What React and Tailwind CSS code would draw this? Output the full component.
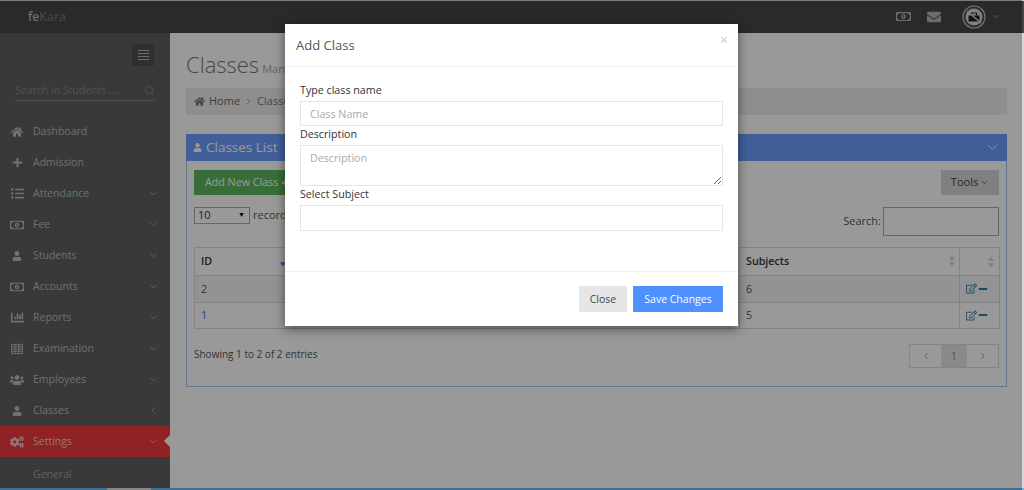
import {
  FaHome, FaPlus, FaListUl, FaRegMoneyBillAlt, FaUser, FaChartBar, FaUsers, FaCogs, FaEnvelope, FaRegEdit, FaMinus,
} from "react-icons/fa";
import { ChevronDown, ChevronLeft, ChevronRight, Search } from "lucide-react";

function GridIcon({ size }) {
  return (
    <svg width={size} height={size} viewBox="0 0 13 13" fill="none" stroke="currentColor" strokeWidth="1">
      <path d="M.5 1.5h12v10H.5zM.5 4h12M.5 6.5h12M.5 9h12M4.5 1.5v10M8.5 1.5v10" />
    </svg>
  );
}

const menu = [
  { label: "Dashboard", icon: FaHome, size: 12 },
  { label: "Admission", icon: FaPlus, size: 11 },
  { label: "Attendance", icon: FaListUl, size: 13, arrow: "down" },
  { label: "Fee", icon: FaRegMoneyBillAlt, size: 14, arrow: "down" },
  { label: "Students", icon: FaUser, size: 10, arrow: "down" },
  { label: "Accounts", icon: FaRegMoneyBillAlt, size: 14, arrow: "down" },
  { label: "Reports", icon: FaChartBar, size: 13, arrow: "down" },
  { label: "Examination", icon: GridIcon, size: 12, arrow: "down" },
  { label: "Employees", icon: FaUsers, size: 14, arrow: "down" },
  { label: "Classes", icon: FaUser, size: 10, arrow: "left" },
  { label: "Settings", icon: FaCogs, size: 14, arrow: "down", active: true },
];

function SortIcon({ active }) {
  return (
    <svg width="6" height="12" viewBox="0 0 7 13" className="shrink-0">
      <path d="M3.5 0 7 5H0z" fill={active ? "transparent" : "#d2d2d2"} />
      <path d="M0 8h7l-3.5 5z" fill={active ? "#6f7fd8" : "#d2d2d2"} />
    </svg>
  );
}

function SideItem({ item }) {
  const Icon = item.icon;
  return (
    <div className={`relative flex items-center h-[31px] ${item.active ? "bg-[#ef3a3f] text-[#f0c8c8]" : ""}`}>
      <span className="w-[33px] flex justify-center pl-[5px] pr-[4px]">
        <Icon size={item.size} />
      </span>
      <span>{item.label}</span>
      {item.arrow === "down" && <ChevronDown size={11} strokeWidth={1.5} className="absolute left-[148px]" />}
      {item.arrow === "left" && <ChevronLeft size={11} strokeWidth={1.5} className="absolute left-[148px]" />}
      {item.active && (
        <span className="absolute right-0 top-[9px] border-y-[6px] border-r-[6px] border-y-transparent border-r-white" />
      )}
    </div>
  );
}

function Sidebar() {
  return (
    <aside className="w-[170px] shrink-0 bg-[#5f5f5f] text-[#bdbdbd] text-[10.5px]">
      <div className="h-[83px] relative">
        <div className="flex justify-end pt-[11px] pr-[16px]">
          <div className="w-[22px] h-[22px] bg-[#505050] flex items-center justify-center text-[#b5b5b5]">
            <svg width="11" height="10" viewBox="0 0 11 10" stroke="currentColor" strokeWidth="1">
              <path d="M0 .5h11M0 3.5h11M0 6.5h11M0 9.5h11" />
            </svg>
          </div>
        </div>
        <div className="mx-[15px] mt-[15px] h-[20px] border-b border-[#8a8a8a] flex items-center justify-between text-[#8a8a8a]">
          <span>Search in Students ....</span>
          <Search size={11} />
        </div>
      </div>
      {menu.map((m) => (
        <SideItem key={m.label} item={m} />
      ))}
      <div className="pl-[33px] pt-[10px] text-[#a0a0a0]">General</div>
    </aside>
  );
}

function Panel() {
  return (
    <section className="mt-[19px] h-[253px] border border-[#a9c3f2] border-t-0">
      <div className="h-[27px] bg-[#6c9fff] flex items-center justify-between pl-[7px] pr-[7px] text-white -mx-px">
        <span className="flex items-center gap-[4px] text-[13.5px] font-medium">
          <FaUser size={9} /> Classes List
        </span>
        <ChevronDown size={15} strokeWidth={1.5} />
      </div>
      <div className="px-[7px] pt-[9px] text-[#555] text-[11px]">
        <div className="flex justify-between">
          <button className="h-[25px] w-[200px] bg-[#5cb85c] text-white text-[10.7px] text-left pl-[11px] flex items-center gap-[3px]">
            Add New Class <FaPlus size={8} />
          </button>
          <button className="h-[25px] w-[58px] bg-[#d6d6d6] text-[#444] flex items-center justify-center gap-[2px]">
            Tools <ChevronDown size={9} />
          </button>
        </div>
        <div className="flex justify-between mt-[12px] h-[29px]">
          <div className="flex items-start gap-[3px]">
            <div className="w-[56px] h-[17px] border border-[#aaa] flex items-center justify-between pl-[3px] pr-[4px] text-[#333]">
              <span>10</span>
              <span className="text-[7px] text-black">▼</span>
            </div>
            <span>records per page</span>
          </div>
          <div className="flex items-center gap-[2px]">
            <span>Search:</span>
            <div className="w-[116px] h-[29px] border border-[#aaa]" />
          </div>
        </div>
        <table className="mt-[11px] w-[805px] table-fixed border-collapse text-[10.7px]">
          <colgroup>
            <col className="w-[92px]" />
            <col className="w-[453px]" />
            <col className="w-[220px]" />
            <col className="w-[40px]" />
          </colgroup>
          <thead>
            <tr className="h-[28px] text-[#333] font-semibold">
              <th className="border border-[#ddd] pl-[6px] text-left font-semibold">
                <div className="flex justify-between items-center"><span>ID</span><SortIcon active /></div>
              </th>
              <th className="border border-[#ddd]" />
              <th className="border border-[#ddd] pl-[6px] pr-[4px] text-left font-semibold">
                <div className="flex justify-between items-center"><span>Subjects</span><SortIcon /></div>
              </th>
              <th className="border border-[#ddd] pr-[5px]">
                <div className="flex justify-end"><SortIcon /></div>
              </th>
            </tr>
          </thead>
          <tbody>
            {[["2", "6", "bg-[#f5f5f5]", "text-[#555]"], ["1", "5", "", "text-[#337ab7]"]].map(([id, subj, bg, idColor]) => (
              <tr key={id} className={`h-[26.5px] ${bg}`}>
                <td className={`border border-[#ddd] px-[6px] ${idColor}`}>{id}</td>
                <td className="border border-[#ddd]" />
                <td className="border border-[#ddd] px-[6px]">{subj}</td>
                <td className="border border-[#ddd] pl-[6px]">
                  <div className="flex items-center gap-[1px] text-[#3f86b0]">
                    <FaRegEdit size={11} />
                    <FaMinus size={10} className="text-[#2a7aa8]" />
                  </div>
                </td>
              </tr>
            ))}
          </tbody>
        </table>
        <div className="flex justify-between items-start mt-[15px]">
          <span className="pt-[3px] text-[10px]">Showing 1 to 2 of 2 entries</span>
          <div className="flex h-[24px] border border-[#ddd] text-[#888] items-stretch">
            <span className="w-[31px] flex items-center justify-center"><ChevronLeft size={10} /></span>
            <span className="w-[26px] flex items-center justify-center bg-[#e6e6e6]">1</span>
            <span className="w-[31px] flex items-center justify-center"><ChevronRight size={10} /></span>
          </div>
        </div>
      </div>
    </section>
  );
}

function Field({ label, placeholder, textarea, height }) {
  return (
    <div>
      <div className="text-[#333] leading-[16px] h-[15px]">{label}</div>
      {textarea ? (
        <textarea
          placeholder={placeholder}
          className={`block w-full ${height} mt-[4px] border border-[#e5e5e5] px-[9px] py-[4px] placeholder:text-[#aaa] outline-none`}
        />
      ) : (
        <input
          placeholder={placeholder}
          className={`block w-full ${height} mt-[4px] border border-[#e5e5e5] px-[9px] placeholder:text-[#aaa] outline-none`}
        />
      )}
    </div>
  );
}

function Modal() {
  return (
    <div className="absolute left-[285px] top-[24px] w-[453px] h-[302px] bg-white shadow-[0_3px_10px_rgba(0,0,0,0.5)] text-[10.7px] text-[#555]">
      <div className="relative h-[43px] border-b border-[#eee] flex items-center pl-[11px] pt-[1px] text-[13px] text-[#555]">
        Add Class
        <span className="absolute right-[10px] top-[5px] text-[14px] text-[#ccc]">×</span>
      </div>
      <div className="h-[204px] px-[15px] pt-[15px]">
        <Field label="Type class name" placeholder="Class Name" height="h-[25px]" />
        <Field label="Description" placeholder="Description" textarea height="h-[41px]" />
        <Field label="Select Subject" height="h-[26px]" />
      </div>
      <div className="border-t border-[#eee] h-[55px] flex justify-end items-start gap-[6px] pt-[14px] pr-[15px] text-[10.5px]">
        <button className="w-[48px] h-[26px] pt-px bg-[#e6e6e6] text-[#444]">Close</button>
        <button className="w-[90px] h-[26px] pt-px bg-[#4d90fe] text-white">Save Changes</button>
      </div>
    </div>
  );
}

export default function App() {
  return (
    <div className="relative w-[1024px] h-[490px] overflow-hidden bg-white font-['Open_Sans',sans-serif] flex flex-col">
      <div className="h-px bg-[#ccc] shrink-0" />
      <header className="h-[32px] shrink-0 bg-[#474747] flex items-center justify-between pl-[28px] pr-[24px] border-b border-[#444]">
        <span className="text-[12px] font-semibold text-[#b4b4b4]">fe<span className="text-[#707070]">Kara</span></span>
        <div className="flex items-center text-[#b5b5b5]">
          <FaRegMoneyBillAlt size={15} />
          <FaEnvelope size={14} className="ml-[16px]" />
          <svg width="24" height="24" viewBox="0 0 24 24" className="ml-[21px]">
            <circle cx="12" cy="12" r="11" fill="#474747" stroke="#c0c0c0" strokeWidth="1.2" />
            <circle cx="12" cy="12" r="8.5" fill="#d8d8d8" />
            <path d="M6.5 10.5h11v6h-11z" fill="#222" />
            <path d="M9.5 10.5V8h5v2.5" fill="none" stroke="#222" strokeWidth="1.2" />
            <path d="M5 6l14 12" stroke="#d8d8d8" strokeWidth="1.5" />
          </svg>
          <ChevronDown size={9} className="ml-[5px]" />
        </div>
      </header>
      <div className="flex flex-1 min-h-0">
        <Sidebar />
        <main className="flex-1 pl-[16px] pr-[15px] min-w-0">
          <div className="h-[55px] flex items-baseline pt-[13px] text-[#777]">
            <h1 className="text-[22px] font-light leading-[36px]">Classes</h1>
            <span className="ml-[3px] text-[11px] text-[#aaa]">Manage Classes</span>
          </div>
          <div className="h-[27px] bg-[#ededed] flex items-center pl-[8px] text-[11px] text-[#777] gap-[4px]">
            <FaHome size={11} /> <span className="text-[#666]">Home</span>
            <ChevronRight size={9} /> <span>Classes</span>
          </div>
          <Panel />
        </main>
        <div className="w-[2px] shrink-0 bg-[#d8d8d8]" />
      </div>
      <div className="h-[2px] shrink-0 bg-[#66b9f7] flex">
        <div className="ml-[107px] w-[44px] bg-[#e0e0e0]" />
      </div>
      <div className="absolute inset-y-0 left-0 right-[2px] bg-black/40" />
      <Modal />
    </div>
  );
}
